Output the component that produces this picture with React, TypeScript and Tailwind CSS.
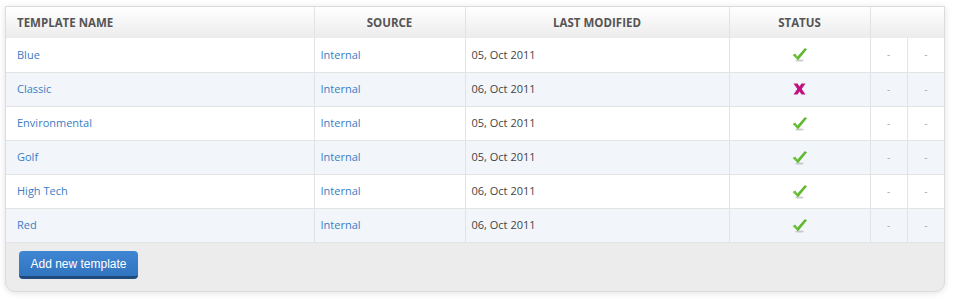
const rows = [
  { name: "Blue", date: "05, Oct 2011", ok: true },
  { name: "Classic", date: "06, Oct 2011", ok: false },
  { name: "Environmental", date: "05, Oct 2011", ok: true },
  { name: "Golf", date: "05, Oct 2011", ok: true },
  { name: "High Tech", date: "06, Oct 2011", ok: true },
  { name: "Red", date: "06, Oct 2011", ok: true },
];

function Check() {
  return (
    <svg width="17" height="15" viewBox="0 0 16 14">
      <ellipse cx="8" cy="12.6" rx="4" ry="0.9" fill="#999" opacity="0.5" />
      <path d="M1.5 7.5 L4 6 L6 9 L13 1 L15 2 L6.5 12.5 Z" fill="#6cc43a" />
      <path d="M4 6 L6 9 L13 1 L15 2 L6.5 12.5 Z" fill="#5bb02b" opacity="0.6" />
    </svg>
  );
}

function Cross() {
  return (
    <svg width="13" height="12" viewBox="0 0 13 12">
      <path
        d="M0.5 0.5 H4.5 L6.5 3.5 L8.5 0.5 H12.5 L8.7 6 L12.5 11.5 H8.5 L6.5 8.5 L4.5 11.5 H0.5 L4.3 6 Z"
        fill="#c1127f"
      />
    </svg>
  );
}

export default function App() {
  return (
    <div className="w-[956px] h-[300px] bg-white font-['Open_Sans',sans-serif]">
      <div className="ml-[5px] mt-[6px] w-[940px] rounded-b-[10px] bg-[#ececec] shadow-[0_1px_6px_rgba(0,0,0,0.12)] border border-[#dcdcdc]">
        <table className="w-full border-collapse table-fixed text-[11px]">
          <colgroup>
            <col className="w-[308px]" />
            <col className="w-[151px]" />
            <col className="w-[264px]" />
            <col className="w-[141px]" />
            <col className="w-[37px]" />
            <col />
          </colgroup>
          <thead>
            <tr className="h-[31px] bg-gradient-to-b from-white to-[#ececec] text-[11.5px] font-bold text-[#555] uppercase">
              <th className="text-left pl-[11px] border-r border-[#e3e3e3]">Template Name</th>
              <th className="border-r border-[#e3e3e3]">Source</th>
              <th className="border-r border-[#e3e3e3]">Last Modified</th>
              <th className="border-r border-[#e3e3e3]">Status</th>
              <th colSpan={2}></th>
            </tr>
          </thead>
          <tbody>
            {rows.map((r, i) => (
              <tr
                key={r.name}
                className={`h-[34px] border-b border-[#e3e3e3] ${i % 2 === 1 ? "bg-[#f2f6fa]" : "bg-white"}`}
              >
                <td className="pl-[11px] text-[#3a7dc4] border-r border-[#e3e3e3]">{r.name}</td>
                <td className="pl-[6px] text-[#3a7dc4] border-r border-[#e3e3e3]">Internal</td>
                <td className="pl-[6px] text-[#444] border-r border-[#e3e3e3]">{r.date}</td>
                <td className="border-r border-[#e3e3e3]">
                  <div className="flex justify-center items-center">{r.ok ? <Check /> : <Cross />}</div>
                </td>
                <td className="text-center text-[#aaa] text-[10px] border-r border-[#e3e3e3]">-</td>
                <td className="text-center text-[#aaa] text-[10px]">-</td>
              </tr>
            ))}
          </tbody>
        </table>
        <div className="h-[48px] pl-[13px] pt-[7px]">
          <button className="h-[28px] w-[119px] rounded-[4px] bg-gradient-to-b from-[#3f86d2] to-[#3174c0] border-b-[3px] border-[#1f4a7c] text-white text-[12px] font-['Liberation_Sans',sans-serif]">
            Add new template
          </button>
        </div>
      </div>
    </div>
  );
}
